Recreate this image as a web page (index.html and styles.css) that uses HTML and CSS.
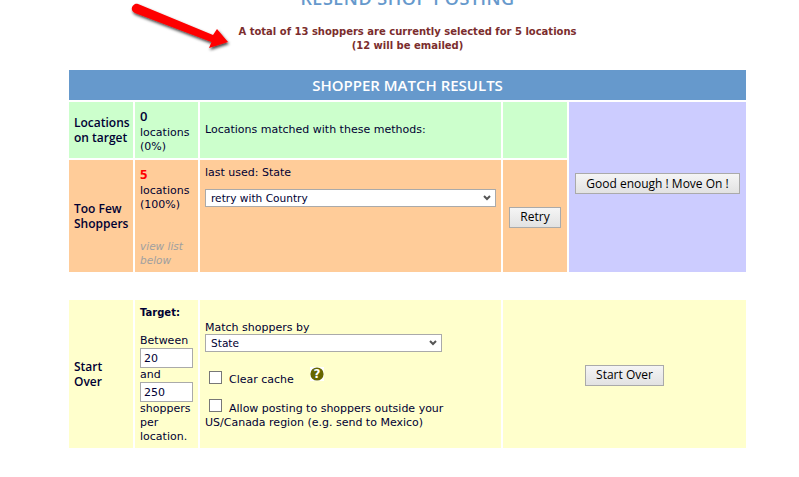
FILE: index.html
```html
<!DOCTYPE html>
<html lang="en">
<head>
<meta charset="utf-8">
<title>Shopper Match Results</title>
<link rel="stylesheet" href="styles.css">
</head>
<body>
<svg class="arrow" width="110" height="56" viewBox="0 0 110 56">
  <defs><filter id="sh" x="-20%" y="-30%" width="140%" height="170%"><feDropShadow dx="1" dy="2" stdDeviation="1.5" flood-color="#000" flood-opacity=".75"/></filter></defs>
  <path filter="url(#sh)" fill="#fe0000" d="M7 4 C8 3.500 9 3.500 10 4 L85 35 L89 29 L100 42 L81 48 L83.500 42 L7 13 C2.500 11 3 6 7 4 Z"/>
</svg>
<main class="page">
  <h1 class="title">RESEND SHOP POSTING</h1>
  <p class="summary">A total of 13 shoppers are currently selected for 5 locations<br>(12 will be emailed)</p>
  <section class="results">
    <h2 class="results-head">SHOPPER MATCH RESULTS</h2>
    <div class="cell green label">Locations on target</div>
    <div class="cell green count"><b class="num">0</b>locations<br>(0%)</div>
    <div class="cell green middle">Locations matched with these methods:</div>
    <div class="cell green"></div>
    <div class="cell violet move"><button class="btn" type="button">Good enough ! Move On !</button></div>
    <div class="cell orange label">Too Few Shoppers</div>
    <div class="cell orange count"><b class="num red">5</b>locations<br>(100%)<em class="view">view list below</em></div>
    <div class="cell orange used">
      <div>last used: State</div>
      <select class="sel retry-sel"><option>retry with Country</option></select>
    </div>
    <div class="cell orange center retry"><button class="btn" type="button">Retry</button></div>
  </section>
  <section class="start">
    <div class="cell yellow label">Start Over</div>
    <div class="cell yellow target">
      <b class="target-head">Target:</b>
      <div>Between</div>
      <input class="num-input" value="20" aria-label="Minimum">
      <div>and</div>
      <input class="num-input" value="250" aria-label="Maximum">
      <div>shoppers per location.</div>
    </div>
    <div class="cell yellow match">
      <div>Match shoppers by</div>
      <select class="sel match-sel"><option>State</option></select>
      <div class="cache">
        <span class="box"></span><span class="cache-text">Clear cache</span>
        <svg class="help" width="14" height="14" viewBox="0 0 14 14"><circle cx="7" cy="7" r="6.600" fill="#666600"/><text x="7" y="11.200" text-anchor="middle" class="help-q">?</text></svg>
      </div>
      <div class="allow"><span class="box"></span><span class="allow-text">Allow posting to shoppers outside your US/Canada region (e.g. send to Mexico)</span></div>
    </div>
    <div class="cell yellow center start-btn"><button class="btn" type="button">Start Over</button></div>
  </section>
</main>
</body>
</html>
```

FILE: styles.css
```css
* { box-sizing: border-box; }
html, body { margin: 0; background: #fff; }
body {
  position: relative;
  height: 477px;
  overflow: hidden;
  font-family: "DejaVu Sans", Verdana, sans-serif;
  font-size: 11px;
  line-height: 14px;
  color: #000033;
}
.arrow { position: absolute; left: 128px; top: 0; }
.page { width: 677px; margin: -12px 0 0 69px; }
.title {
  margin: 0;
  height: 20px;
  font: 600 18px/20px "Open Sans", sans-serif;
  letter-spacing: 0.5px;
  color: #6699cc;
  text-align: center;
}
.summary {
  margin: 17px 0 0;
  height: 45px;
  text-align: center;
  font-weight: bold;
  font-size: 10px;
  color: #7b2d2d;
}
.results {
  display: grid;
  grid-template-columns: 64px 63px 301px 64px 177px;
  grid-template-rows: 30px 56px 112px;
  gap: 2px;
}
.results-head {
  grid-column: 1 / -1;
  margin: 0;
  background: #6699cc;
  color: #fff;
  text-align: center;
  font: 600 15px/30px "Open Sans", "Noto Sans", sans-serif;
}
.start {
  display: grid;
  grid-template-columns: 64px 63px 301px 243px;
  height: 148px;
  gap: 2px;
  margin-top: 28px;
}
.cell { padding: 0 5px; min-width: 0; }
.green { background: #ccffcc; }
.orange { background: #ffcc99; }
.violet { background: #ccccff; }
.yellow { background: #ffffcc; }
.label {
  display: flex;
  align-items: center;
  font: 600 12px/15px "Open Sans", "Noto Sans", sans-serif;
  color: #000033;
}
.count { padding-top: 7px; }
.num { display: block; margin-bottom: 2px; font: 600 13px/15px "Open Sans", sans-serif; }
.red { color: #ff0000; font-weight: bold; }
.view { display: block; margin-top: 27px; color: #a0a0a0; font-size: 10.500px; }
.middle { display: flex; align-items: center; }
.move { grid-column: 5; grid-row: 2 / span 2; padding: 71px 6px 0; text-align: center; }
.center { display: flex; align-items: center; justify-content: center; }
.retry { padding-top: 2px; }
.start-btn { padding-top: 2px; }
.used { padding-top: 6px; }
.btn {
  height: 21px;
  padding: 0 10px;
  background: linear-gradient(#f5f5f5, #e2e2e2);
  border: 1px solid #aaaaaa;
  border-radius: 0;
  font: 12px/18px "Open Sans", sans-serif;
  color: #000;
  white-space: nowrap;
}
.sel {
  display: block;
  height: 18px;
  padding: 0 0 0 5px;
  appearance: none;
  background: #fff url("data:image/svg+xml,%3Csvg xmlns='http://www.w3.org/2000/svg' width='8' height='6'%3E%3Cpath d='M1 1l3 3 3-3' fill='none' stroke='%23555' stroke-width='2'/%3E%3C/svg%3E") no-repeat right 4px center;
  border: 1px solid #aaaaaa;
  border-radius: 0;
  font: 10.600px "DejaVu Sans", sans-serif;
  color: #000033;
}
.retry-sel { width: 291px; margin-top: 9px; }
.match-sel { width: 237px; margin-top: -1px; }
.target { padding-top: 6px; }
.target-head { display: block; margin-bottom: 14px; font-size: 10px; }
.num-input {
  display: block;
  width: 53px;
  height: 20px;
  padding: 0 3px;
  border: 1px solid #aaaaaa;
  background: #fff;
  font: 11px "DejaVu Sans", sans-serif;
  color: #000033;
}
.match { padding-top: 21px; }
.cache { display: flex; align-items: flex-start; margin-top: 19px; height: 28px; padding-left: 4px; }
.box { display: inline-block; flex: none; width: 13px; height: 13px; background: #fff; border: 1px solid #777; }
.cache-text { margin-left: 7px; padding-top: 2px; }
.help { margin: -4px 0 0 16px; background: #fff; }
.help-q { font: bold 12px "DejaVu Sans", sans-serif; fill: #fff; }
.allow { width: 250px; }
.allow .box { margin: 0 7px 0 4px; vertical-align: 0; }
```
